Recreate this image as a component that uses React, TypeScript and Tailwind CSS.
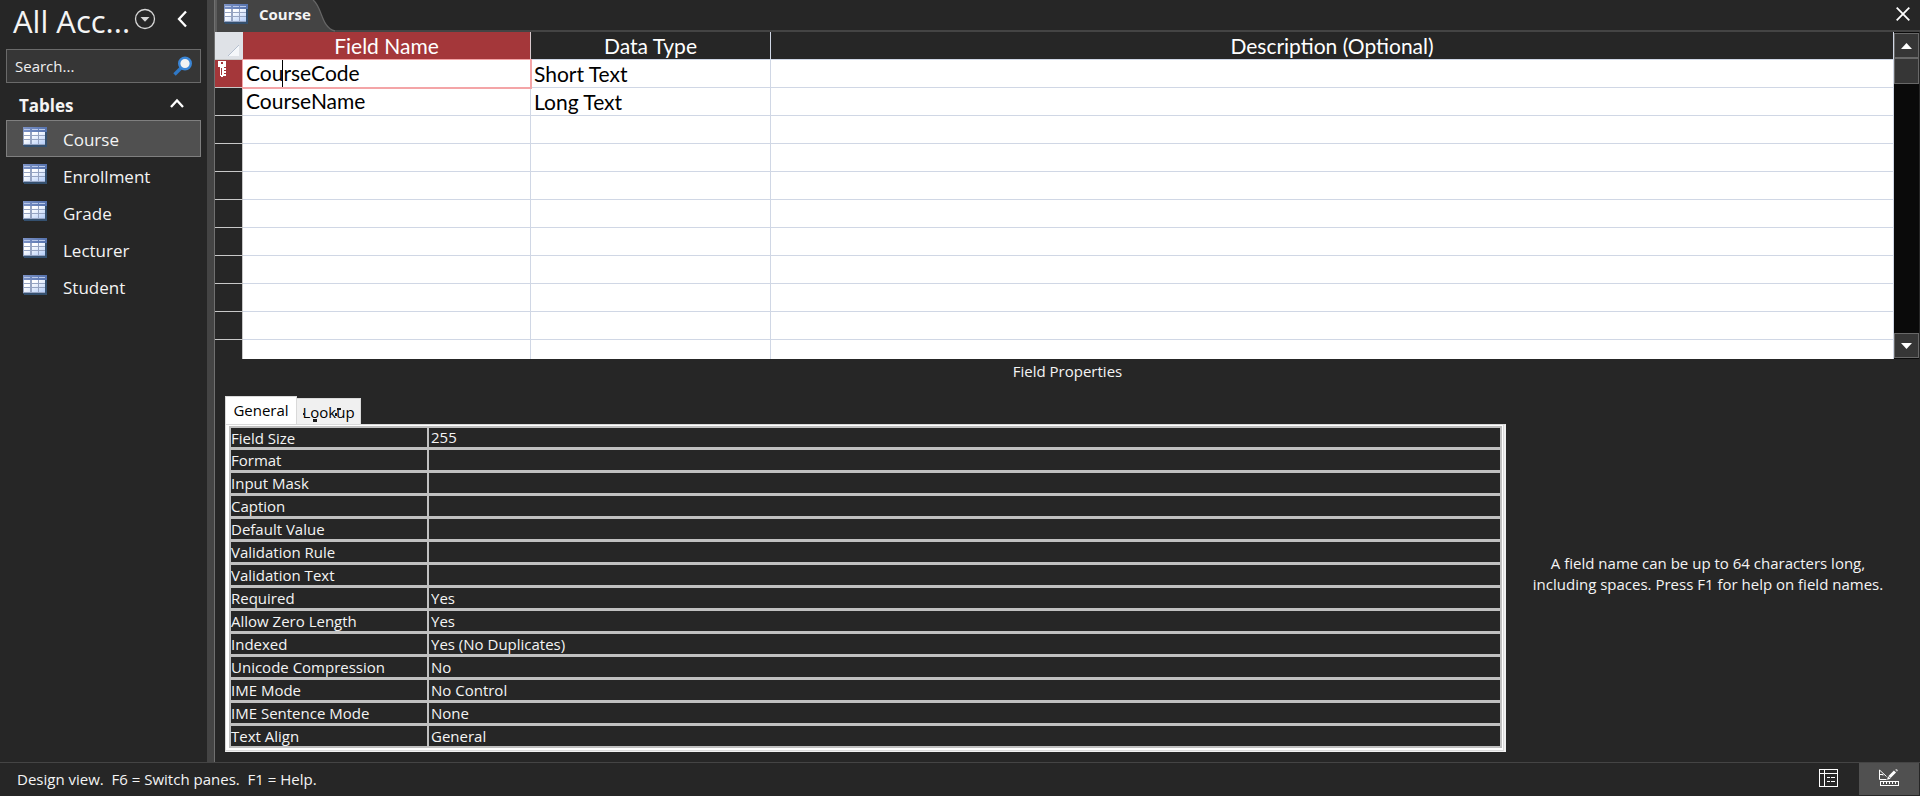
import React from 'react';

const tables = ['Course', 'Enrollment', 'Grade', 'Lecturer', 'Student'];

const fields = [
  { name: 'CourseCode', type: 'Short Text' },
  { name: 'CourseName', type: 'Long Text' },
];

const blankRows = Array.from({ length: 28 }, (_, i) => i);

const properties = [
  ['Field Size', '255'],
  ['Format', ''],
  ['Input Mask', ''],
  ['Caption', ''],
  ['Default Value', ''],
  ['Validation Rule', ''],
  ['Validation Text', ''],
  ['Required', 'Yes'],
  ['Allow Zero Length', 'Yes'],
  ['Indexed', 'Yes (No Duplicates)'],
  ['Unicode Compression', 'No'],
  ['IME Mode', 'No Control'],
  ['IME Sentence Mode', 'None'],
  ['Text Align', 'General'],
];

function TableIcon() {
  return (
    <svg width="24" height="20" viewBox="0 0 24 20" shapeRendering="crispEdges" aria-hidden="true" className="shrink-0">
      <defs>
        <linearGradient id="cells" x1="0" y1="0" x2="1" y2="1">
          <stop offset="0.3" stopColor="#ffffff" />
          <stop offset="1" stopColor="#b4cdf8" />
        </linearGradient>
        <linearGradient id="head" x1="0" y1="0" x2="1" y2="0">
          <stop offset="0" stopColor="#7d93c6" />
          <stop offset="1" stopColor="#5572ad" />
        </linearGradient>
      </defs>
      <path d="M0 0h24v20H1v-1H0z" fill="#34506f" />
      <path d="M0 0h22v18H0z" fill="#96a4c2" />
      <path d="M0 0h24v5H0z" fill="url(#head)" />
      <path d="M1 2h6v1H1zM9 2h6v1H9zM16 2h6v1h-6z" fill="#b9c8e8" />
      <path
        d="M1 5h6v3H1zM9 5h6v3H9zM16 5h6v3h-6zM1 9h6v3H1zM9 9h6v3H9zM16 9h6v3h-6zM1 13h6v4H1zM9 13h6v4H9zM16 13h6v4h-6z"
        fill="url(#cells)"
      />
    </svg>
  );
}

function Sidebar() {
  return (
    <aside className="flex w-[207px] shrink-0 flex-col px-[6px]">
      <header className="flex h-[49px] items-start pl-[7px]">
        <h1 className="w-[121px] shrink-0 pt-[2px] text-[31px] leading-[38px] whitespace-nowrap">All Acc...</h1>
        <button aria-label="Choose objects" className="mt-[8px]">
          <svg width="22" height="22" viewBox="0 0 22 22" aria-hidden="true">
            <circle cx="11" cy="11" r="9.5" fill="none" stroke="#d6d6d6" strokeWidth="1.3" />
            <path d="M6.5 9h9L11 13.8z" fill="#d6d6d6" />
          </svg>
        </button>
        <button aria-label="Collapse pane" className="mt-[10px] ml-[20px]">
          <svg width="12" height="18" viewBox="0 0 12 18" aria-hidden="true">
            <path d="M10 1.5 3 9l7 7.5" fill="none" stroke="#fff" strokeWidth="2.3" />
          </svg>
        </button>
      </header>
      <label className="flex h-[34px] items-center border border-[#6a6a6a] bg-[#363636] pr-[7px] pl-[8px]">
        <input
          aria-label="Search"
          placeholder="Search..."
          className="w-0 flex-1 bg-transparent text-[15px] text-white outline-none placeholder:text-[#f0f0f0]"
        />
        <svg width="20" height="20" viewBox="0 0 20 20" aria-hidden="true">
          <path d="M1.5 18.5 8 12" stroke="#2f78c6" strokeWidth="3.4" />
          <circle cx="12" cy="7.5" r="5.8" fill="#f2f2f2" stroke="#3b86d6" strokeWidth="2.4" />
        </svg>
      </label>
      <button className="flex h-[37px] items-center justify-between pt-[8px] pr-[17px] pl-[13px] text-[17px] font-bold">
        Tables
        <svg width="14" height="10" viewBox="0 0 14 10" aria-hidden="true" className="mb-[5px]">
          <path d="m1 9 6-6.5L13 9" fill="none" stroke="#fff" strokeWidth="2.3" />
        </svg>
      </button>
      <nav>
        {tables.map((name) => (
          <a
            key={name}
            href={'#' + name}
            className={
              name === 'Course'
                ? 'flex h-[37px] items-center gap-[16px] border border-[#7f7f7f] bg-[#505050] pl-[16px] text-[17px]'
                : 'flex h-[37px] items-center gap-[16px] border border-transparent pl-[16px] text-[17px]'
            }
          >
            <span className="pb-[3px]">
              <TableIcon />
            </span>
            <span className="pt-[2px]">{name}</span>
          </a>
        ))}
      </nav>
    </aside>
  );
}

function DocumentTabs() {
  return (
    <div className="flex h-[32px] shrink-0 items-stretch justify-between border-b-2 border-[#444]">
      <div className="-mb-[2px] flex">
        <button className="flex items-start border-l-2 border-[#5c5c5c] bg-[#444] pt-[4px] pl-[7px] text-[15px] font-bold">
          <TableIcon />
          <span className="w-[64px] pl-[11px] text-left leading-[20px]">Course</span>
        </button>
        <svg width="24" height="32" viewBox="0 0 24 32" aria-hidden="true">
          <path d="M0 0h1c8 6 8 28 22 31v1H0z" fill="#444" />
          <path d="M1 0c9 6 8 28 22 31" fill="none" stroke="#666" strokeWidth="1.3" />
        </svg>
      </div>
      <button aria-label="Close" className="mr-[10px] mb-[2px]">
        <svg width="14" height="14" viewBox="0 0 14 14" aria-hidden="true">
          <path d="m.7.7 12.6 12.6M13.3.7.7 13.3" stroke="#fff" strokeWidth="1.8" />
        </svg>
      </button>
    </div>
  );
}

function FieldRow({ index, name, type }: { index: number; name: string; type: string }) {
  const current = index === 0;
  return (
    <tr className="h-[28px]">
      <th
        className={
          current
            ? 'border-r border-b border-[#c8c8c8] bg-[#a4373a] p-0 align-top'
            : 'border-r border-b border-[#c8c8c8] bg-[#262626] p-0 align-top'
        }
      >
        {current && (
          <svg width="9" height="17" viewBox="0 0 9 17" shapeRendering="crispEdges" role="img" aria-label="Primary key" className="mt-px ml-[3px]">
            <path d="M0 0h8v6H0zM2 6h4v9H5v1H3v-1H2zM6 7h2v2H6zM6 10h2v2H6zM6 13h2v2H6z" fill="#fff" />
            <path d="M3 1h2v2H3zM3 7h1v7H3z" fill="#a4373a" />
          </svg>
        )}
      </th>
      <td className="relative border-r border-b border-[#d0d7e5] p-0">
        <input
          aria-label={'Field name ' + (index + 1)}
          defaultValue={name}
          className="block h-[27px] w-full bg-transparent pb-[2px] pl-[3px] text-[21px] text-black outline-none"
        />
        {current && (
          <>
            <span className="pointer-events-none absolute -top-px -right-[2px] -bottom-[2px] -left-px z-10 border-2 border-t border-l border-[#f4a5a7]" />
            <span className="pointer-events-none absolute top-0 left-[39px] h-[27px] w-px bg-black" />
          </>
        )}
      </td>
      <td className="border-r border-b border-[#d0d7e5] p-0 pl-[3px] leading-[27px] text-black">{type}</td>
      <td className="border-r border-b border-[#d0d7e5] p-0" />
    </tr>
  );
}

function FieldGrid() {
  return (
    <section className="flex min-h-0 flex-1 overflow-hidden">
      <div className="min-w-0 flex-1 overflow-hidden">
        <table className="w-full table-fixed border-separate border-spacing-0 bg-white font-['Lato','Liberation_Sans',sans-serif] text-[21px]">
          <colgroup>
            <col className="w-[28px]" />
            <col className="w-[288px]" />
            <col className="w-[240px]" />
            <col />
          </colgroup>
          <thead>
            <tr className="h-[28px] leading-[27px] text-white">
              <th aria-label="Select all" className="border-b border-[#c8c8c8] bg-[#dfe2e7] p-0 align-bottom">
                <svg width="11" height="11" viewBox="0 0 11 11" aria-hidden="true" className="mb-[3px] ml-[13px]">
                  <path d="M11 0v11H0z" fill="#f5f7fa" />
                  <path d="M11 0 0 11" stroke="#b4bfcf" />
                </svg>
              </th>
              <th className="border-r border-b border-[#d8c8cc] bg-[#a4373a] p-0 font-normal">Field Name</th>
              <th className="border-r border-b border-[#d0d7e5] bg-[#262626] p-0 font-normal">Data Type</th>
              <th className="border-r border-b border-[#d0d7e5] bg-[#262626] p-0 font-normal">Description (Optional)</th>
            </tr>
          </thead>
          <tbody>
            {fields.map((field, i) => (
              <FieldRow key={field.name} index={i} name={field.name} type={field.type} />
            ))}
            {blankRows.map((i) => (
              <FieldRow key={i} index={i + fields.length} name="" type="" />
            ))}
          </tbody>
        </table>
      </div>
      <div className="flex w-[26px] shrink-0 flex-col border-r border-[#262626] bg-[#0a0a0a] pt-px pb-px">
        <button aria-label="Scroll up" className="flex h-[25px] shrink-0 items-center justify-center border border-[#686868] bg-[#363636]">
          <svg width="11" height="6" viewBox="0 0 11 6" aria-hidden="true">
            <path d="M5.5 0 11 6H0z" fill="#fff" />
          </svg>
        </button>
        <div className="h-[26px] shrink-0 border border-[#686868] bg-[#363636]" />
        <div className="flex-1" />
        <button aria-label="Scroll down" className="flex h-[25px] shrink-0 items-center justify-center border border-[#686868] bg-[#363636]">
          <svg width="11" height="6" viewBox="0 0 11 6" aria-hidden="true">
            <path d="M0 0h11L5.5 6z" fill="#fff" />
          </svg>
        </button>
      </div>
    </section>
  );
}

function FieldProperties() {
  return (
    <section className="shrink-0 pb-[10px] text-[15px]">
      <h2 className="h-[37px] text-center leading-[24px]">Field Properties</h2>
      <div className="flex items-center pl-[10px]">
        <div className="min-w-0 flex-1">
          <div role="tablist" className="flex items-end">
            <button role="tab" aria-selected="true" className="h-[28px] w-[72px] border border-b-0 border-[#d9d9d9] bg-white text-black">
              General
            </button>
            <button role="tab" aria-selected="false" className="relative h-[26px] w-[64px] border border-b-0 border-l-0 border-[#d9d9d9] bg-[#f0f0f0] pt-[2px] text-black">
              Lookup
              <svg width="64" height="26" viewBox="0 0 64 26" shapeRendering="crispEdges" aria-hidden="true" className="absolute top-0 left-0">
                <path d="M16 20h4v3h-4zM40 9h4v2h-4zM38 14h2v3h-2zM6 14h1v2H6z" fill="#1a1a1a" />
              </svg>
            </button>
          </div>
          <div className="border-t border-r-2 border-b border-l border-t-[#d9d9d9] border-r-[#f0f0f0] border-b-[#f0f0f0] border-l-[#d9d9d9]">
            <div className="mr-px mb-px border-t border-r border-b-2 border-l-3 border-white outline outline-[#d9d9d9]">
              <table className="w-full table-fixed border-separate border-spacing-0 border-2 border-[#c0c0c0] bg-[#262626]">
                <colgroup>
                  <col className="w-[198px]" />
                  <col />
                </colgroup>
                <tbody>
                  {properties.map(([label, value], i) => (
                    <tr key={label}>
                      <th
                        scope="row"
                        className={
                          i === properties.length - 1
                            ? 'border-r-2 border-[#c0c0c0] p-0 text-left font-normal'
                            : 'border-r-2 border-b-3 border-[#c0c0c0] p-0 text-left font-normal'
                        }
                      >
                        <label
                          htmlFor={'property-' + i}
                          className={i === 0 ? 'block h-[19px] leading-[20px]' : 'block h-[20px] leading-[20px]'}
                        >
                          {label}
                        </label>
                      </th>
                      <td className={i === properties.length - 1 ? 'p-0' : 'border-b-3 border-[#c0c0c0] p-0'}>
                        <input
                          id={'property-' + i}
                          defaultValue={value}
                          className={
                            i === 0
                              ? 'block h-[19px] w-full bg-transparent pl-[2px] outline-none'
                              : 'block h-[20px] w-full bg-transparent pl-[2px] outline-none'
                          }
                        />
                      </td>
                    </tr>
                  ))}
                </tbody>
              </table>
            </div>
          </div>
        </div>
        <p className="w-[414px] shrink-0 pr-[10px] text-center leading-[21px]">
          A field name can be up to 64 characters long,
          <br />
          including spaces. Press F1 for help on field names.
        </p>
      </div>
    </section>
  );
}

function StatusBar() {
  return (
    <footer className="flex h-[34px] shrink-0 items-stretch justify-between border-t border-[#444] pr-px pb-px pl-[17px] text-[15px]">
      <p className="self-center whitespace-pre">Design view.  F6 = Switch panes.  F1 = Help.</p>
      <div className="flex">
        <button aria-label="Datasheet view" className="flex w-[60px] items-center justify-center">
          <svg width="20" height="18" viewBox="0 0 20 18" fill="none" stroke="#fff" shapeRendering="crispEdges" aria-hidden="true" className="mb-[2px]">
            <path d="M.5.5h18v17H.5zM.5 4.5h18M5.5.5v17M8 8.5h3M12 8.5h4M8 12.5h3M12 12.5h4" />
          </svg>
        </button>
        <button aria-label="Design view" className="flex w-[60px] items-center justify-center bg-[#505050]">
          <svg width="20" height="18" viewBox="0 0 20 18" fill="none" stroke="#fff" aria-hidden="true" className="mb-[2px]">
            <path d="M7.5 10.5H.5V1l7 6.5M.5 5.500h3.500v1" />
            <path d="M10.500 8 16 2.500" strokeWidth="3" />
            <path d="m17 1.800 1.300-1.200" strokeWidth="2.600" stroke="#bbb" />
            <path d="M8 10.800 9 7.200l2.700 2.500z" fill="#fff" stroke="none" />
            <path d="M1.500 12.500h18v4h-18zM4.500 12.500v2M7.500 12.500v2M10.500 12.500v2M13.500 12.500v2M16.500 12.500v2" shapeRendering="crispEdges" />
          </svg>
        </button>
      </div>
    </footer>
  );
}

export default function App() {
  return (
    <div className="flex h-screen flex-col bg-[#262626] font-['Open_Sans','Noto_Sans',sans-serif] text-[#f4f4f4]">
      <div className="flex min-h-0 flex-1">
        <Sidebar />
        <div className="w-[8px] shrink-0 border-r border-[#707070] bg-[#444]" />
        <main className="flex min-w-0 flex-1 flex-col">
          <DocumentTabs />
          <FieldGrid />
          <FieldProperties />
        </main>
      </div>
      <StatusBar />
    </div>
  );
}
